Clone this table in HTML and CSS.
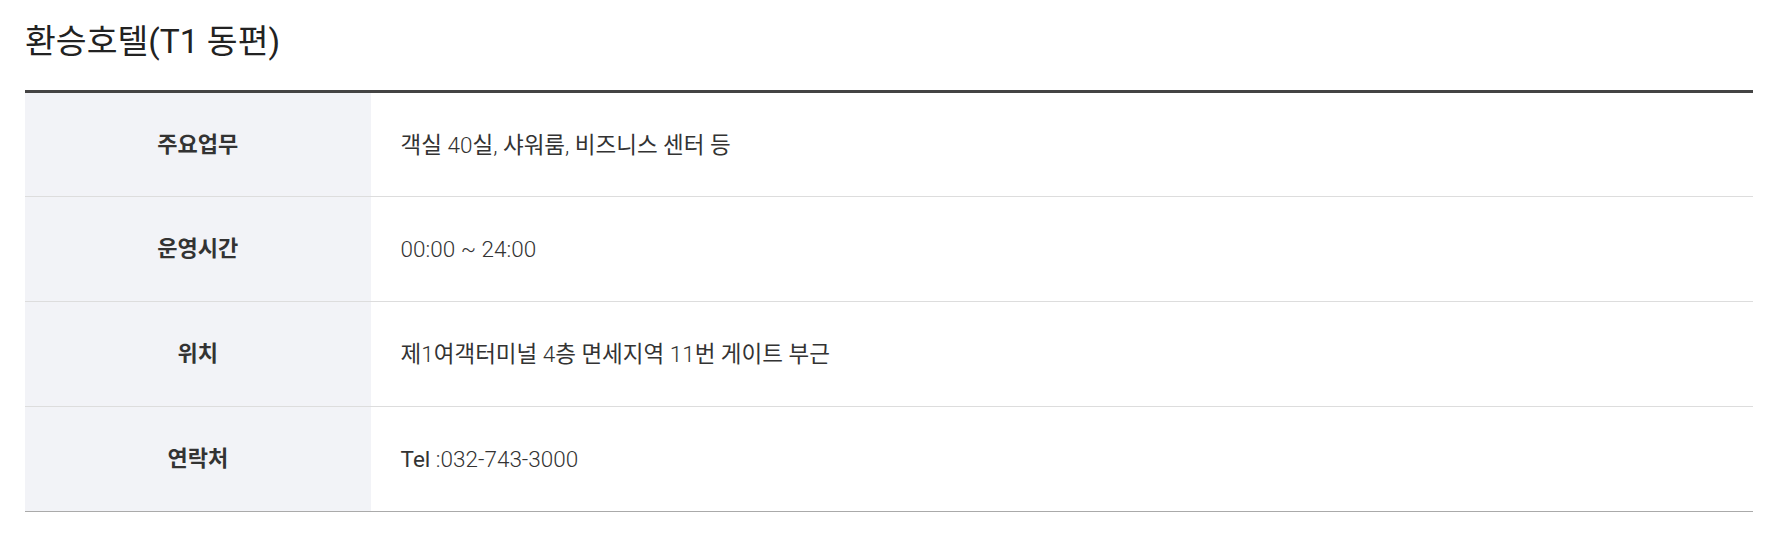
FILE: index.html
```html
<!DOCTYPE html>
<html lang="ko">
<head>
<meta charset="utf-8">
<title>환승호텔(T1 동편)</title>
<link rel="stylesheet" href="styles.css">
</head>
<body>
<div class="wrap">
  <h3 class="title">환승호텔(T1 동편)</h3>
  <table class="info">
    <tbody>
      <tr><th>주요업무</th><td>객실 40실, 샤워룸, 비즈니스 센터 등</td></tr>
      <tr><th>운영시간</th><td>00:00 ~ 24:00</td></tr>
      <tr><th>위치</th><td>제1여객터미널 4층 면세지역 11번 게이트 부근</td></tr>
      <tr><th>연락처</th><td><span class="label">Tel</span> :032-743-3000</td></tr>
    </tbody>
  </table>
</div>
</body>
</html>
```

FILE: styles.css
```css
html, body {
  margin: 0;
  padding: 0;
  background: #fff;
}
body {
  font-family: "Roboto", "Noto Sans CJK KR", sans-serif;
  color: #333;
}
.wrap {
  padding: 0 27px 0 25px;
}
.title {
  margin: 0;
  padding-top: 20px;
  height: 90px;
  box-sizing: border-box;
  font-size: 33.5px;
  line-height: 44px;
  font-weight: 400;
  color: #222;
}
.info {
  width: 100%;
  border-collapse: separate;
  border-spacing: 0;
  border-top: 3px solid #444;
  table-layout: fixed;
}
.info th,
.info td {
  height: 105px;
  box-sizing: border-box;
  padding: 0;
  border-bottom: 1px solid #ddd;
  font-size: 22px;
  line-height: 28px;
  vertical-align: middle;
}
.info tr:first-child th,
.info tr:first-child td {
  height: 104px;
}
.info tr:last-child th,
.info tr:last-child td {
  border-bottom-color: #aaa;
}
.info th {
  width: 20%;
  background: #f2f3f7;
  font-weight: 700;
  color: #333;
  text-align: center;
}
.info td {
  padding-left: 30px;
  font-family: "Roboto Light", "Noto Sans CJK KR", sans-serif;
  font-size: 22.5px;
  font-weight: 400;
  color: #333;
  text-align: left;
}
.info .label {
  font-family: "Roboto", "Noto Sans CJK KR", sans-serif;
  font-weight: 400;
}
```
